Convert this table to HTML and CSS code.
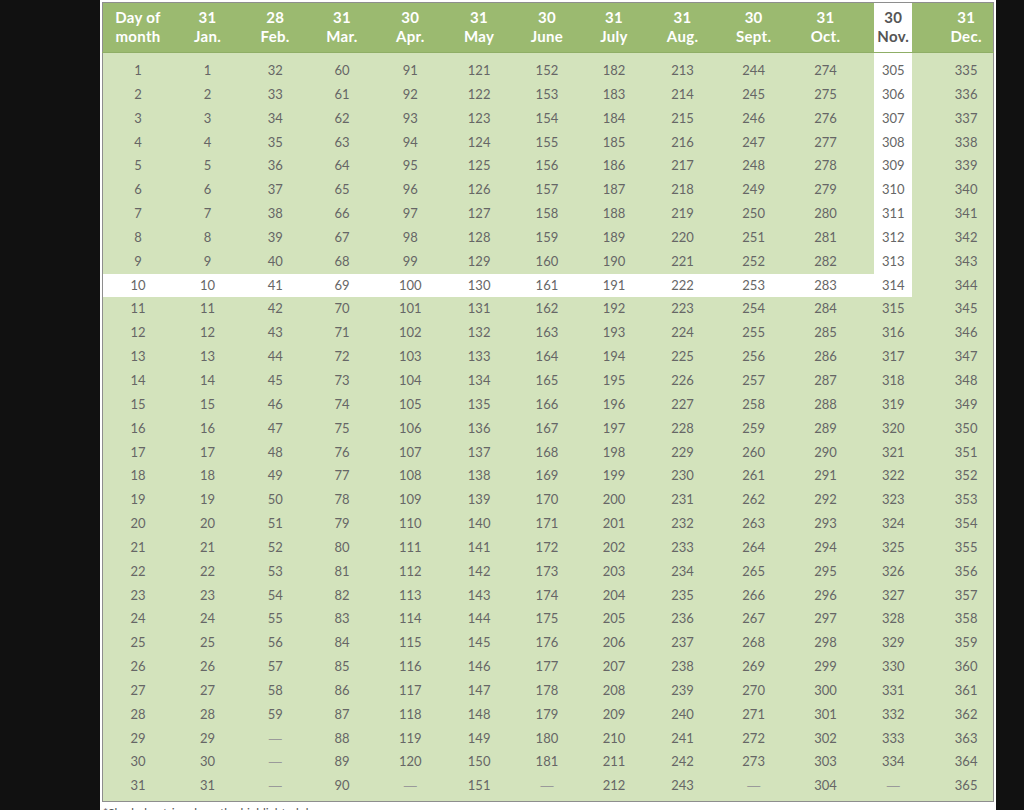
FILE: index.html
```html
<!DOCTYPE html>
<html lang="en">
<head>
<meta charset="utf-8">
<title>Day of year table</title>
<link rel="stylesheet" href="styles.css">
</head>
<body>
<div class="page">
<table class="doy">
<thead>
<tr>
<th class="c-day">Day of<br>month</th>
<th class="c-jan">31<br>Jan.</th>
<th class="c-feb">28<br>Feb.</th>
<th class="c-mar">31<br>Mar.</th>
<th class="c-apr">30<br>Apr.</th>
<th class="c-may">31<br>May</th>
<th class="c-jun">30<br>June</th>
<th class="c-jul">31<br>July</th>
<th class="c-aug">31<br>Aug.</th>
<th class="c-sep">30<br>Sept.</th>
<th class="c-oct">31<br>Oct.</th>
<th class="c-nov w">30<br>Nov.</th>
<th class="c-dec">31<br>Dec.</th>
</tr>
</thead>
<tbody>
<tr class="first"><td>1</td><td>1</td><td>32</td><td>60</td><td>91</td><td>121</td><td>152</td><td>182</td><td>213</td><td>244</td><td>274</td><td class="w">305</td><td>335</td></tr>
<tr><td>2</td><td>2</td><td>33</td><td>61</td><td>92</td><td>122</td><td>153</td><td>183</td><td>214</td><td>245</td><td>275</td><td class="w">306</td><td>336</td></tr>
<tr><td>3</td><td>3</td><td>34</td><td>62</td><td>93</td><td>123</td><td>154</td><td>184</td><td>215</td><td>246</td><td>276</td><td class="w">307</td><td>337</td></tr>
<tr><td>4</td><td>4</td><td>35</td><td>63</td><td>94</td><td>124</td><td>155</td><td>185</td><td>216</td><td>247</td><td>277</td><td class="w">308</td><td>338</td></tr>
<tr><td>5</td><td>5</td><td>36</td><td>64</td><td>95</td><td>125</td><td>156</td><td>186</td><td>217</td><td>248</td><td>278</td><td class="w">309</td><td>339</td></tr>
<tr><td>6</td><td>6</td><td>37</td><td>65</td><td>96</td><td>126</td><td>157</td><td>187</td><td>218</td><td>249</td><td>279</td><td class="w">310</td><td>340</td></tr>
<tr><td>7</td><td>7</td><td>38</td><td>66</td><td>97</td><td>127</td><td>158</td><td>188</td><td>219</td><td>250</td><td>280</td><td class="w">311</td><td>341</td></tr>
<tr><td>8</td><td>8</td><td>39</td><td>67</td><td>98</td><td>128</td><td>159</td><td>189</td><td>220</td><td>251</td><td>281</td><td class="w">312</td><td>342</td></tr>
<tr><td>9</td><td>9</td><td>40</td><td>68</td><td>99</td><td>129</td><td>160</td><td>190</td><td>221</td><td>252</td><td>282</td><td class="w">313</td><td>343</td></tr>
<tr class="hl"><td>10</td><td>10</td><td>41</td><td>69</td><td>100</td><td>130</td><td>161</td><td>191</td><td>222</td><td>253</td><td>283</td><td class="w">314</td><td>344</td></tr>
<tr><td>11</td><td>11</td><td>42</td><td>70</td><td>101</td><td>131</td><td>162</td><td>192</td><td>223</td><td>254</td><td>284</td><td>315</td><td>345</td></tr>
<tr><td>12</td><td>12</td><td>43</td><td>71</td><td>102</td><td>132</td><td>163</td><td>193</td><td>224</td><td>255</td><td>285</td><td>316</td><td>346</td></tr>
<tr><td>13</td><td>13</td><td>44</td><td>72</td><td>103</td><td>133</td><td>164</td><td>194</td><td>225</td><td>256</td><td>286</td><td>317</td><td>347</td></tr>
<tr><td>14</td><td>14</td><td>45</td><td>73</td><td>104</td><td>134</td><td>165</td><td>195</td><td>226</td><td>257</td><td>287</td><td>318</td><td>348</td></tr>
<tr><td>15</td><td>15</td><td>46</td><td>74</td><td>105</td><td>135</td><td>166</td><td>196</td><td>227</td><td>258</td><td>288</td><td>319</td><td>349</td></tr>
<tr><td>16</td><td>16</td><td>47</td><td>75</td><td>106</td><td>136</td><td>167</td><td>197</td><td>228</td><td>259</td><td>289</td><td>320</td><td>350</td></tr>
<tr><td>17</td><td>17</td><td>48</td><td>76</td><td>107</td><td>137</td><td>168</td><td>198</td><td>229</td><td>260</td><td>290</td><td>321</td><td>351</td></tr>
<tr><td>18</td><td>18</td><td>49</td><td>77</td><td>108</td><td>138</td><td>169</td><td>199</td><td>230</td><td>261</td><td>291</td><td>322</td><td>352</td></tr>
<tr><td>19</td><td>19</td><td>50</td><td>78</td><td>109</td><td>139</td><td>170</td><td>200</td><td>231</td><td>262</td><td>292</td><td>323</td><td>353</td></tr>
<tr><td>20</td><td>20</td><td>51</td><td>79</td><td>110</td><td>140</td><td>171</td><td>201</td><td>232</td><td>263</td><td>293</td><td>324</td><td>354</td></tr>
<tr><td>21</td><td>21</td><td>52</td><td>80</td><td>111</td><td>141</td><td>172</td><td>202</td><td>233</td><td>264</td><td>294</td><td>325</td><td>355</td></tr>
<tr><td>22</td><td>22</td><td>53</td><td>81</td><td>112</td><td>142</td><td>173</td><td>203</td><td>234</td><td>265</td><td>295</td><td>326</td><td>356</td></tr>
<tr><td>23</td><td>23</td><td>54</td><td>82</td><td>113</td><td>143</td><td>174</td><td>204</td><td>235</td><td>266</td><td>296</td><td>327</td><td>357</td></tr>
<tr><td>24</td><td>24</td><td>55</td><td>83</td><td>114</td><td>144</td><td>175</td><td>205</td><td>236</td><td>267</td><td>297</td><td>328</td><td>358</td></tr>
<tr><td>25</td><td>25</td><td>56</td><td>84</td><td>115</td><td>145</td><td>176</td><td>206</td><td>237</td><td>268</td><td>298</td><td>329</td><td>359</td></tr>
<tr><td>26</td><td>26</td><td>57</td><td>85</td><td>116</td><td>146</td><td>177</td><td>207</td><td>238</td><td>269</td><td>299</td><td>330</td><td>360</td></tr>
<tr><td>27</td><td>27</td><td>58</td><td>86</td><td>117</td><td>147</td><td>178</td><td>208</td><td>239</td><td>270</td><td>300</td><td>331</td><td>361</td></tr>
<tr><td>28</td><td>28</td><td>59</td><td>87</td><td>118</td><td>148</td><td>179</td><td>209</td><td>240</td><td>271</td><td>301</td><td>332</td><td>362</td></tr>
<tr><td>29</td><td>29</td><td class="na">—</td><td>88</td><td>119</td><td>149</td><td>180</td><td>210</td><td>241</td><td>272</td><td>302</td><td>333</td><td>363</td></tr>
<tr><td>30</td><td>30</td><td class="na">—</td><td>89</td><td>120</td><td>150</td><td>181</td><td>211</td><td>242</td><td>273</td><td>303</td><td>334</td><td>364</td></tr>
<tr class="last"><td>31</td><td>31</td><td class="na">—</td><td>90</td><td class="na">—</td><td>151</td><td class="na">—</td><td>212</td><td>243</td><td class="na">—</td><td>304</td><td class="na">—</td><td>365</td></tr>
</tbody>
</table>
<p class="note">*Shaded entries show the highlighted day.</p>
</div>
</body>
</html>
```

FILE: styles.css
```css
html, body {
  margin: 0;
  padding: 0;
  background: #111111;
  height: 100%;
}

.page {
  margin-left: 100px;
  width: 896px;
  height: 810px;
  overflow: hidden;
  background: #ffffff;
  padding: 2px 2px 0 2px;
  box-sizing: border-box;
}

.doy {
  width: 892px;
  table-layout: fixed;
  border-collapse: collapse;
  border: 1px solid #8e8e8e;
  font-family: Lato, "Open Sans", sans-serif;
}

.doy th,
.doy td {
  padding: 0;
  text-align: center;
  box-sizing: border-box;
}

.doy th {
  background: #9bba70;
  color: #ffffff;
  font-weight: 700;
  font-size: 15px;
  letter-spacing: 0.3px;
  line-height: 19px;
  padding-top: 5px;
  padding-bottom: 6px;
  border-bottom: 1px solid #8fae66;
}

.doy th.w {
  background: #ffffff;
  color: #555555;
}

.c-day { width: 70.5px; }
.c-jan { width: 69px; }
.c-feb { width: 66px; }
.c-mar { width: 67.5px; }
.c-apr { width: 69px; }
.c-may { width: 68.5px; }
.c-jun { width: 67px; }
.c-jul { width: 67px; }
.c-aug { width: 70px; }
.c-sep { width: 72px; }
.c-oct { width: 84.5px; }
.c-nov { width: 38px; }
.c-dec { width: 81px; }

.doy th:nth-child(11),
.doy td:nth-child(11) {
  padding-right: 13px;
}

.doy th:nth-child(13),
.doy td:nth-child(13) {
  padding-left: 27px;
}

.doy td {
  background: #d3e3bc;
  color: #666666;
  font-size: 13px;
  height: 23.85px;
  line-height: 23.85px;
}

.doy tr.first td {
  padding-top: 6px;
  height: 29.85px;
}

.doy tr.last td {
  padding-bottom: 2.5px;
  height: 26.35px;
}

.doy td.w,
.doy tr.hl td:not(:last-child) {
  background: #ffffff;
}

.doy td.na {
  color: #9a9a9a;
  font-family: "Liberation Sans", sans-serif;
}

.note {
  margin: 3px 0 0 1px;
  font-family: Lato, "Open Sans", sans-serif;
  font-size: 12px;
  color: #555555;
}
```
